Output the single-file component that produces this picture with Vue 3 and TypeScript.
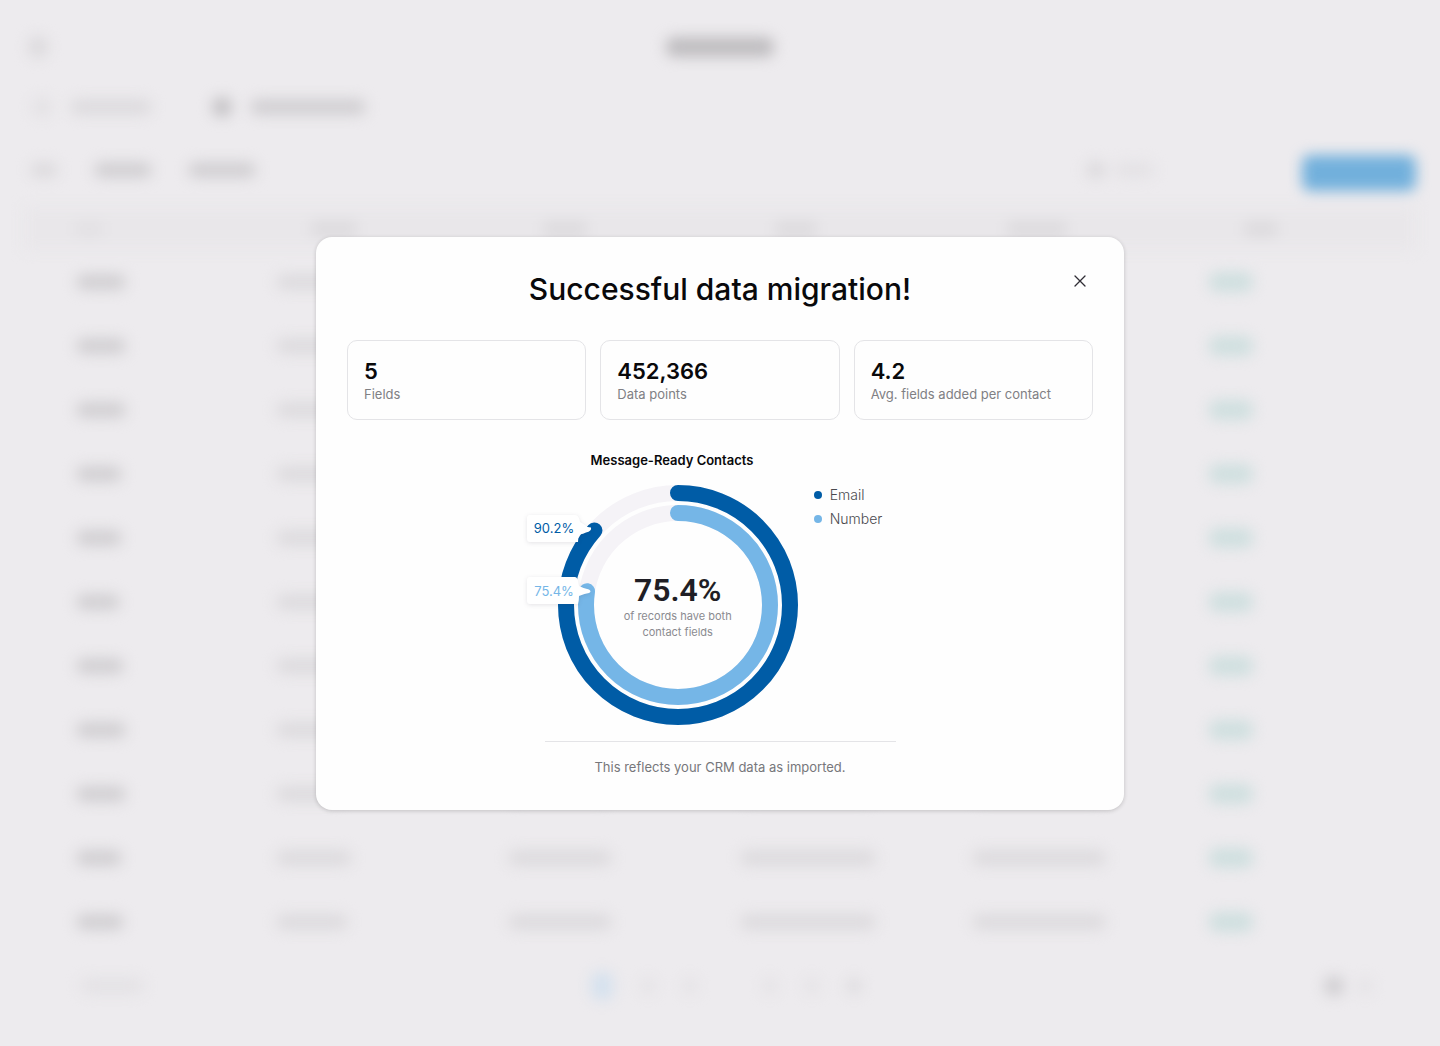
<script setup lang="ts">
import { ref } from 'vue'

interface Stat { value: string; label: string }
interface Series { name: string; value: string; color: string; radius: number; sweep: number }

const open = ref(true)

const stats: Stat[] = [
  { value: '5', label: 'Fields' },
  { value: '452,366', label: 'Data points' },
  { value: '4.2', label: 'Avg. fields added per contact' },
]

const series: Series[] = [
  { name: 'Email', value: '90.2%', color: '#005ca6', radius: 112, sweep: 86.6 },
  { name: 'Number', value: '75.4%', color: '#75b6e7', radius: 92, sweep: 77.4 },
]

// Placeholder bar widths for the page behind the dialog
const headings: number[] = [30, 48, 46, 44, 62, 36]
const nameWidths: number[] = [50, 50, 50, 46, 46, 44, 48, 50, 50, 46, 48]
const rows: number[][] = nameWidths.map((w, i) => [w, 76 - (i % 3) * 4, 104, 136, 134])
</script>

<template>
  <div class="page">
    <div class="backdrop" aria-hidden="true" inert>
      <header class="topbar">
        <i class="bar light back"></i>
        <i class="bar darkest brand"></i>
      </header>
      <div class="tabs">
        <span class="tab"><i class="bar faint square"></i><i class="bar light tab-one"></i></span>
        <span class="tab"><i class="bar dark square"></i><i class="bar tab-two"></i></span>
      </div>
      <div class="toolbar">
        <i class="bar light tool-one"></i>
        <i class="bar tool-two"></i>
        <i class="bar tool-three"></i>
        <span class="search"><i class="bar light lens"></i><i class="bar faint term"></i></span>
        <i class="action"></i>
      </div>
      <table class="grid">
        <colgroup>
          <col class="c1" /><col class="c2" /><col class="c3" /><col class="c3" /><col class="c4" /><col />
        </colgroup>
        <thead>
          <tr>
            <th v-for="(w, i) in headings" :key="i"><i class="bar light" :style="{ width: w + 'px' }"></i></th>
          </tr>
        </thead>
        <tbody>
          <tr v-for="(row, r) in rows" :key="r">
            <td v-for="(w, c) in row" :key="c"><i class="bar" :class="{ light: c > 0 }" :style="{ width: w + 'px' }"></i></td>
            <td><i class="bar pill"></i></td>
          </tr>
        </tbody>
      </table>
      <footer class="pager">
        <i class="bar faint count"></i>
        <span class="pages">
          <i class="bar current"></i><i class="bar faint dot"></i><i class="bar faint dot"></i>
          <i class="bar faint dot gap"></i><i class="bar faint dot"></i><i class="bar light dot"></i>
        </span>
        <span class="size"><i class="bar square"></i><i class="bar faint dot"></i></span>
      </footer>
    </div>

    <div v-if="open" class="overlay">
      <section class="modal" role="dialog" aria-modal="true" aria-labelledby="dialog-title">
        <button class="close" type="button" aria-label="Close" @click="open = false">
          <svg width="12" height="12" viewBox="0 0 12 12" fill="none" stroke="#2f2d35" stroke-width="1.3" stroke-linecap="round">
            <path d="M1 1 11 11M11 1 1 11" />
          </svg>
        </button>
        <h1 id="dialog-title">Successful data migration!</h1>

        <div class="stats">
          <div v-for="s in stats" :key="s.label" class="stat">
            <strong>{{ s.value }}</strong>
            <span>{{ s.label }}</span>
          </div>
        </div>

        <h2>Message-Ready Contacts</h2>
        <div class="chart">
          <div class="ring">
            <svg viewBox="0 0 240 240" role="img" aria-label="Email 90.2%, Number 75.4%">
              <g fill="none" stroke-width="16">
                <template v-for="s in series" :key="s.name">
                  <circle cx="120" cy="120" :r="s.radius" stroke="#f5f3f7" />
                  <circle
                    cx="120" cy="120" :r="s.radius" :stroke="s.color" stroke-linecap="round"
                    pathLength="100" :stroke-dasharray="`${s.sweep} 100`" transform="rotate(-90 120 120)"
                  />
                </template>
              </g>
              <g class="callout" fill="#fff">
                <path d="M-28 30H17Q21 30 22 37L27 40Q29 42.500 33 42.500Q34 46 28 47.500Q25 49 22 49.500Q20 52 20 57H-28Q-31 57 -31 54V33Q-31 30 -28 30Z" />
                <path d="M-28 92H17Q20 92 21 101Q27 104 31 104.500Q34 106.500 31 108Q27 108.500 21 111Q21 115 20 119H-28Q-31 119 -31 116V95Q-31 92 -28 92Z" />
              </g>
              <text x="-4" y="48" class="tag" :fill="series[0].color">{{ series[0].value }}</text>
              <text x="-4" y="111" class="tag" :fill="series[1].color">{{ series[1].value }}</text>
            </svg>
            <p class="center"><strong>75.4%</strong>of records have both<br />contact fields</p>
          </div>
          <ul class="legend">
            <li v-for="s in series" :key="s.name"><i :style="{ background: s.color }"></i>{{ s.name }}</li>
          </ul>
        </div>
        <p class="note">This reflects your CRM data as imported.</p>
      </section>
    </div>
  </div>
</template>

<style>
body { margin: 0; background: #edebee; }
</style>

<style scoped>
* { box-sizing: border-box; }
.page {
  display: grid;
  min-height: 100vh;
  overflow: hidden;
  background: #edebee;
  font-family: Inter, "Liberation Sans", sans-serif;
  color: #09090b;
}
.backdrop, .overlay { grid-area: 1 / 1; }

.backdrop { padding: 0 24px 28px; filter: blur(7px); }
.bar { display: block; flex: none; height: 16px; border-radius: 8px; background: #d1cfd2; }
.bar.light { background: #dddbde; }
.bar.faint { background: #e4e2e5; }
.bar.dark { background: #c6c4c7; }
.bar.darkest { background: #bfbdc0; }
.square { width: 20px; height: 20px; }
.dot { width: 14px; }
.topbar { display: grid; grid-template-columns: 1fr auto 1fr; align-items: center; height: 94px; padding: 0 4px; }
.back { width: 20px; height: 22px; }
.brand { width: 108px; height: 20px; }
.tabs { display: flex; gap: 60px; height: 26px; padding-left: 8px; }
.tab { display: flex; align-items: center; gap: 18px; }
.tab-one { width: 82px; }
.tab-two { width: 116px; }
.toolbar { display: flex; align-items: center; gap: 36px; height: 87px; padding: 13px 0 0 6px; }
.tool-one { width: 28px; }
.tool-two { width: 58px; }
.tool-three { width: 68px; }
.search { display: flex; align-items: center; gap: 8px; flex: 1; justify-content: flex-end; padding-right: 112px; }
.lens { width: 20px; height: 18px; }
.term { width: 40px; }
.action { align-self: flex-end; width: 114px; height: 36px; margin-bottom: 16px; border-radius: 8px; background: #72b0dc; }

.grid { width: 100%; table-layout: fixed; border-collapse: collapse; }
.c1 { width: 14.4%; }
.c2 { width: 16.6%; }
.c3 { width: 16.7%; }
.c4 { width: 17%; }
.grid th { height: 43px; padding: 0 0 0 86px; background: #e9e7ea; }
.grid th:first-child { padding-left: 50px; }
.grid th:first-child .bar { background: #e3e1e4; }
.grid td { height: 64px; padding: 0 0 0 52px; }
.bar.pill { width: 44px; height: 20px; background: #cfdfdf; }
.pager { display: grid; grid-template-columns: 1fr auto 1fr; align-items: center; height: 64px; padding: 0 44px 0 56px; }
.count { width: 64px; }
.pages, .size { display: flex; align-items: center; gap: 28px; }
.size { justify-self: end; gap: 14px; }
.current { width: 22px; height: 28px; background: #d5e1ee; }
.gap { margin-left: 38px; }

.overlay { display: grid; place-items: center; padding: 24px; }
.modal {
  position: relative;
  width: 100%;
  max-width: 808px;
  padding: 32px 31px 34px;
  border-radius: 16px;
  background: #fefefe;
  box-shadow: 0 1px 4px rgba(0, 0, 0, 0.18);
}
.close {
  position: absolute;
  top: 32px;
  right: 32px;
  display: grid;
  place-items: center;
  width: 24px;
  height: 24px;
  padding: 0;
  border: 0;
  background: none;
  cursor: pointer;
}
h1 { margin: 0; font-size: 30px; font-weight: 500; line-height: 40px; text-align: center; }
.stats { display: grid; grid-template-columns: repeat(3, 1fr); gap: 14px; margin-top: 31px; }
.stat { height: 80px; padding: 16px; border: 1px solid #e4e4e7; border-radius: 10px; }
.stat strong { display: block; font-size: 22px; font-weight: 600; line-height: 28px; }
.stat span { display: block; font-size: 13px; line-height: 18px; color: #808084; }
h2 { margin: 30px 96px 0 0; font-size: 13px; font-weight: 600; line-height: 20px; text-align: center; }
.chart { display: flex; justify-content: center; gap: 16px; margin-top: 15px; }
.ring { display: grid; width: 240px; height: 240px; }
.ring > * { grid-area: 1 / 1; }
.ring svg { width: 100%; height: 100%; overflow: visible; }
.callout { filter: drop-shadow(0 1px 2px rgba(40, 30, 60, 0.12)); }
.tag { font-size: 13px; text-anchor: middle; }
.center { align-self: center; justify-self: center; margin: 0; padding-top: 2px; font-size: 11px; line-height: 16px; text-align: center; color: #8b8b90; }
.center strong { display: block; font-family: Roboto, sans-serif; font-size: 32px; font-weight: 600; line-height: 36px; color: #1f1e25; }
.legend { display: grid; gap: 4px; align-content: start; margin: 0; padding: 0; list-style: none; }
.legend li { display: flex; align-items: center; gap: 8px; font-size: 14px; font-weight: 300; line-height: 20px; color: #4a4a4f; }
.legend i { width: 8px; height: 8px; border-radius: 50%; }
.note {
  max-width: 351px;
  margin: 16px auto 0;
  padding-top: 16px;
  border-top: 1px solid #e4e4e7;
  font-size: 13px;
  line-height: 18px;
  text-align: center;
  color: #77777b;
}
</style>
